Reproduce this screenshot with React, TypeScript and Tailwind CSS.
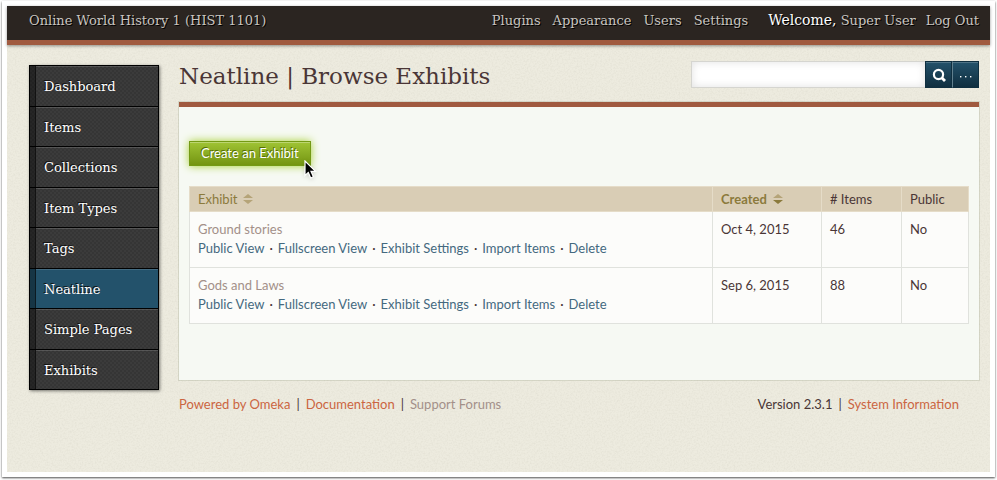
import React from "react";

const NAV = ["Dashboard", "Items", "Collections", "Item Types", "Tags", "Neatline", "Simple Pages", "Exhibits"];
const ACTIONS = ["Public View", "Fullscreen View", "Exhibit Settings", "Import Items", "Delete"];
const EXHIBITS = [
  { title: "Ground stories", created: "Oct 4, 2015", items: 46, isPublic: "No" },
  { title: "Gods and Laws", created: "Sep 6, 2015", items: 88, isPublic: "No" },
];

function PaperTexture() {
  return (
    <svg className="pointer-events-none absolute inset-0 h-full w-full opacity-10" aria-hidden="true">
      <filter id="grain">
        <feTurbulence type="fractalNoise" baseFrequency="0.6" numOctaves="3" stitchTiles="stitch" />
        <feColorMatrix type="matrix" values="0 0 0 0 0.4  0 0 0 0 0.38  0 0 0 0 0.3  2.4 0 0 0 -0.95" />
      </filter>
      <rect width="100%" height="100%" filter="url(#grain)" />
    </svg>
  );
}

function SortIcon({ down = false }: { down?: boolean }) {
  return (
    <svg width="10" height="10" viewBox="0 0 10 10" aria-hidden="true">
      <path d="M5 0 L10 4 H0 Z" fill="#b5a478" />
      <path d="M0 6 H10 L5 10 Z" fill={down ? "#8b7a3c" : "#b5a478"} />
    </svg>
  );
}

function Cursor() {
  return (
    <svg className="absolute top-[19px] left-[115px] drop-shadow-sm" width="13" height="20" viewBox="0 0 13 20" aria-hidden="true">
      <path d="M1 1 V15.5 L4.3 12.4 L6.7 18 L9.4 16.8 L7 11.4 H11.6 Z" fill="#000" stroke="#fff" strokeWidth="1.2" />
    </svg>
  );
}

function Header() {
  return (
    <header className="relative flex h-[39px] items-baseline justify-between border-b-[5px] border-[#a05a3f] bg-[#2b2521] pr-[11px] pl-[22px] pt-1 font-['DejaVu_Serif',serif] text-[13px] leading-5 text-[#c9c5c0] shadow-[0_1px_3px_rgba(0,0,0,0.4)] [text-shadow:1px_1px_0_#000]">
      <a href="#">Online World History 1 (HIST 1101)</a>
      <div className="flex items-baseline">
        <nav className="flex gap-3" aria-label="Administration">
          <a href="#">Plugins</a>
          <a href="#">Appearance</a>
          <a href="#">Users</a>
          <a href="#">Settings</a>
        </nav>
        <div className="ml-5 flex items-baseline gap-2.5">
          <span>
            <span className="text-sm leading-5 text-white">Welcome,</span> <a href="#">Super User</a>
          </span>
          <a href="#">Log Out</a>
        </div>
      </div>
    </header>
  );
}

function SideNav() {
  return (
    <nav
      className="flex h-[325px] w-[130px] shrink-0 flex-col border border-black bg-[#383838] font-['DejaVu_Serif',serif] text-[13px] text-white shadow-[1px_1px_3px_rgba(0,0,0,0.5)] [text-shadow:-1px_-1px_0_#111]"
      aria-label="Sections"
    >
      {NAV.map((name) => (
        <a
          key={name}
          href="#"
          className={`flex flex-1 border-b border-black last:border-b-0 ${name === "Neatline" ? "bg-[#23526b]" : "bg-[#383838] bg-[conic-gradient(#353535_25%,#3b3b3b_0_50%,#353535_0_75%,#3b3b3b_0)] bg-size-[4px_4px]"}`}
        >
          <span className="w-1.5 border-r border-black/50 bg-black/35" />
          <span className="flex flex-1 items-center border-t border-white/15 pt-px pl-2">{name}</span>
        </a>
      ))}
    </nav>
  );
}

function Search() {
  const button =
    "flex h-[27px] w-[27px] items-center justify-center border border-[#0f2f40] bg-linear-to-b from-[#23526b] to-[#102f40] text-white shadow-[inset_0_1px_0_rgba(255,255,255,0.2)]";
  return (
    <form className="flex w-[288px]" role="search" onSubmit={(e) => e.preventDefault()}>
      <input
        type="text"
        aria-label="Search"
        className="h-[27px] min-w-0 flex-1 border border-r-0 border-[#d5d5d0] bg-white px-2 text-sm shadow-[inset_0_0_8px_rgba(0,0,0,0.12)] outline-none"
      />
      <button type="submit" aria-label="Submit search" className={button}>
        <svg width="14" height="14" viewBox="0 0 14 14" fill="none" stroke="currentColor" aria-hidden="true">
          <circle cx="6.5" cy="6.5" r="4.6" strokeWidth="2.2" />
          <path d="M10 10 L13 13" strokeWidth="2.8" />
        </svg>
      </button>
      <button type="button" aria-label="Advanced search" className={`${button} border-l-[#61808e]`}>
        <svg width="12" height="6" viewBox="0 0 12 6" fill="currentColor" aria-hidden="true">
          <rect x="0" y="4" width="1.4" height="1.4" />
          <rect x="5" y="4" width="1.4" height="1.4" />
          <rect x="10" y="4" width="1.4" height="1.4" />
        </svg>
      </button>
    </form>
  );
}

function ExhibitTable() {
  return (
    <table className="mt-5 w-full table-fixed border-collapse bg-[#fcfcfa] text-left text-[13px] leading-[19px]">
      <colgroup>
        <col />
        <col className="w-[109px]" />
        <col className="w-20" />
        <col className="w-[67px]" />
      </colgroup>
      <thead>
        <tr className="h-[25px] bg-[#d9cdb5] [&>th]:border [&>th]:border-[#e5dcc8] [&>th]:px-2 [&>th]:font-normal">
          <th scope="col">
            <a href="#" className="flex items-center gap-1.5 text-[#8b7a3c]">
              Exhibit <SortIcon />
            </a>
          </th>
          <th scope="col">
            <a href="#" className="flex items-center gap-1.5 font-bold text-[#8b7a3c]">
              Created <SortIcon down />
            </a>
          </th>
          <th scope="col"># Items</th>
          <th scope="col">Public</th>
        </tr>
      </thead>
      <tbody>
        {EXHIBITS.map((row) => (
          <tr key={row.title} className="h-14 align-top [&>td]:border [&>td]:border-[#e0e2dd] [&>td]:px-2 [&>td]:pt-2">
            <td>
              <a href="#" className="text-[#a39089]">
                {row.title}
              </a>
              <div className="flex gap-[5px] whitespace-nowrap">
                {ACTIONS.map((action, i) => (
                  <React.Fragment key={action}>
                    {i > 0 && <span>·</span>}
                    <a href="#" className="text-[#44697f]">
                      {action}
                    </a>
                  </React.Fragment>
                ))}
              </div>
            </td>
            <td>{row.created}</td>
            <td>{row.items}</td>
            <td>{row.isPublic}</td>
          </tr>
        ))}
      </tbody>
    </table>
  );
}

export default function App() {
  return (
    <div className="flex min-h-screen bg-white px-0.5 pt-px pb-[3px] font-[Lato,sans-serif] text-[#4a3636]">
      <div className="flex flex-1 bg-white px-[5px] pt-[5px] pb-[5px] shadow-[0_1px_2px_rgba(0,0,0,0.7)]">
        <div className="relative flex-1 bg-[#edebdf]">
          <PaperTexture />
          <Header />
          <div className="relative flex gap-5 pr-[11px] pl-[22px]">
            <div className="pt-5">
              <SideNav />
            </div>
            <main className="min-w-0 flex-1 pt-4">
              <div className="flex h-[41px] items-start justify-between">
                <h1 className="font-['DejaVu_Serif',serif] text-[23px] leading-[30px] whitespace-nowrap">Neatline | Browse Exhibits</h1>
                <Search />
              </div>
              <section className="h-[278px] border-t-[5px] border-[#a05a3f] bg-[#f6f9f3] px-2.5 pt-[34px] shadow-[0_0_0_1px_rgba(120,130,100,0.2)]">
                <div className="relative flex">
                  <button
                    type="button"
                    className="h-[25px] border border-[#749a14] bg-linear-to-b from-[#a0c434] to-[#749510] px-[11px] text-[13px] leading-[23px] text-white shadow-[0_0_8px_#a5cf30,inset_0_1px_0_rgba(255,255,255,0.3)] [text-shadow:-1px_-1px_0_#567000]"
                  >
                    Create an Exhibit
                  </button>
                  <Cursor />
                </div>
                <ExhibitTable />
              </section>
              <footer className="flex justify-between pt-3.5 pr-5 text-[13px] leading-5">
                <p className="flex gap-1.5">
                  <a href="#" className="text-[#cb6541]">Powered by Omeka</a>
                  <span>|</span>
                  <a href="#" className="text-[#cb6541]">Documentation</a>
                  <span>|</span>
                  <a href="#" className="text-[#a39089]">Support Forums</a>
                </p>
                <p className="flex gap-1.5">
                  <span>Version 2.3.1</span>
                  <span>|</span>
                  <a href="#" className="text-[#cb6541]">System Information</a>
                </p>
              </footer>
            </main>
          </div>
        </div>
      </div>
    </div>
  );
}
